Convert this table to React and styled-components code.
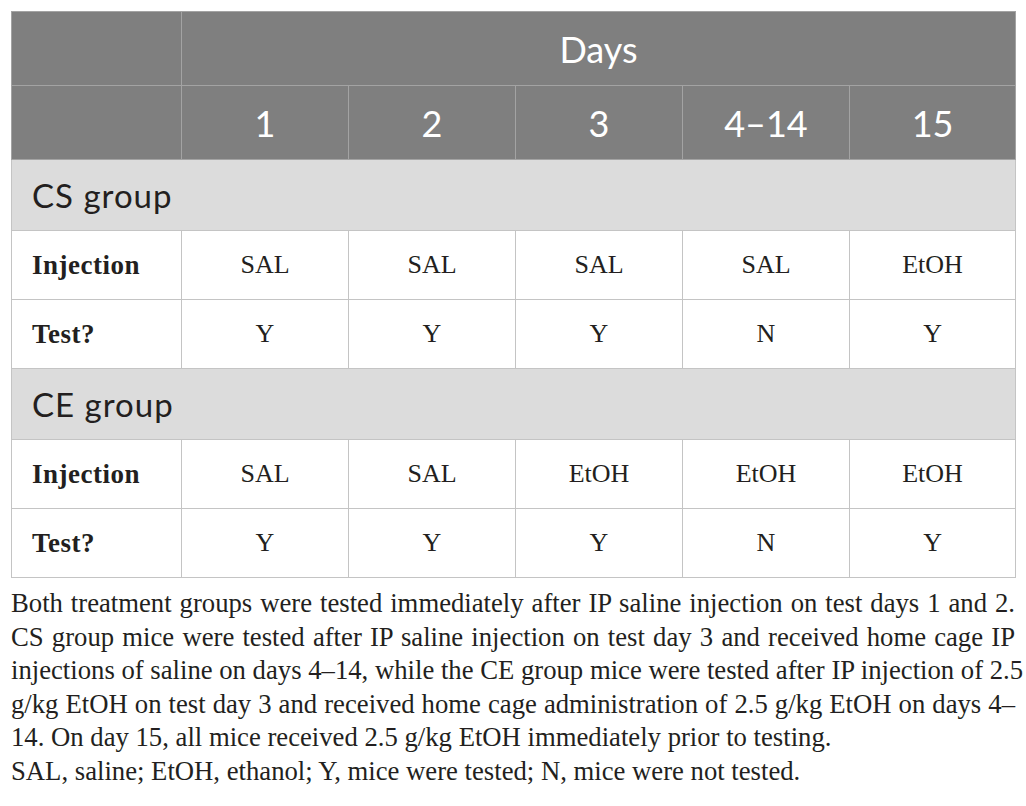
import React from "react";
import styled, { createGlobalStyle } from "styled-components";

const Global = createGlobalStyle`
  html, body { margin: 0; padding: 0; background: #fff; }
  body { font-family: "Liberation Serif", serif; color: #231f20; }
`;

const Page = styled.div`
  padding: 11px 11px 0 11px;
  width: 1004px;
`;

const Table = styled.table`
  border-collapse: collapse;
  table-layout: fixed;
  width: 1004px;
  border: 1px solid #c4c4c4;
`;

const HeadCell = styled.th`
  background: #7f7f7f;
  color: #fff;
  font-family: Lato, "Open Sans", sans-serif;
  font-weight: 400;
  font-size: 36px;
  height: 73px;
  padding: 0;
  text-align: center;
  border: 1px solid #a3a3a3;
`;

const GroupCell = styled.td`
  background: #dcdcdc;
  color: #231f20;
  font-family: Lato, "Open Sans", sans-serif;
  font-size: 33px;
  letter-spacing: 1px;
  height: 70px;
  padding: 0 0 0 20px;
  border: 1px solid #c4c4c4;
  text-align: left;
`;

const LabelCell = styled.td`
  font-family: "Liberation Serif", serif;
  font-weight: 700;
  font-size: 27px;
  letter-spacing: 0.5px;
  height: 68px;
  padding: 0 0 0 20px;
  border: 1px solid #c4c4c4;
  text-align: left;
`;

const DataCell = styled.td`
  font-family: "Liberation Serif", serif;
  font-size: 26px;
  padding: 0;
  border: 1px solid #c4c4c4;
  text-align: center;
`;

const Caption = styled.div`
  margin-top: 9px;
  font-family: "Liberation Serif", serif;
  font-size: 26.7px;
  line-height: 33.5px;
  color: #231f20;
`;

const Line = styled.div`
  white-space: nowrap;
  text-align: ${(p) => (p.$justify ? "justify" : "left")};
  text-align-last: ${(p) => (p.$justify ? "justify" : "left")};
`;

const days = ["1", "2", "3", "4–14", "15"];
const groups = [
  { name: "CS group", injection: ["SAL", "SAL", "SAL", "SAL", "EtOH"], test: ["Y", "Y", "Y", "N", "Y"] },
  { name: "CE group", injection: ["SAL", "SAL", "EtOH", "EtOH", "EtOH"], test: ["Y", "Y", "Y", "N", "Y"] },
];

const lines = [
  ["Both treatment groups were tested immediately after IP saline injection on test days 1 and 2.", true],
  ["CS group mice were tested after IP saline injection on test day 3 and received home cage IP", true],
  ["injections of saline on days 4–14, while the CE group mice were tested after IP injection of 2.5", true],
  ["g/kg EtOH on test day 3 and received home cage administration of 2.5 g/kg EtOH on days 4–", true],
  ["14. On day 15, all mice received 2.5 g/kg EtOH immediately prior to testing.", false],
  ["SAL, saline; EtOH, ethanol; Y, mice were tested; N, mice were not tested.", false],
];

export default function App() {
  return (
    <Page>
      <Global />
      <Table>
        <colgroup>
          <col style={{ width: 170 }} />
          <col style={{ width: 167 }} />
          <col style={{ width: 167 }} />
          <col style={{ width: 167 }} />
          <col style={{ width: 167 }} />
          <col style={{ width: 166 }} />
        </colgroup>
        <thead>
          <tr>
            <HeadCell />
            <HeadCell colSpan={5}>Days</HeadCell>
          </tr>
          <tr>
            <HeadCell />
            {days.map((d) => (
              <HeadCell key={d}>{d}</HeadCell>
            ))}
          </tr>
        </thead>
        <tbody>
          {groups.map((g) => (
            <React.Fragment key={g.name}>
              <tr>
                <GroupCell colSpan={6}>{g.name}</GroupCell>
              </tr>
              <tr>
                <LabelCell>Injection</LabelCell>
                {g.injection.map((v, i) => (
                  <DataCell key={i}>{v}</DataCell>
                ))}
              </tr>
              <tr>
                <LabelCell>Test?</LabelCell>
                {g.test.map((v, i) => (
                  <DataCell key={i}>{v}</DataCell>
                ))}
              </tr>
            </React.Fragment>
          ))}
        </tbody>
      </Table>
      <Caption>
        {lines.map(([t, j], i) => (
          <Line key={i} $justify={j}>
            {t}
          </Line>
        ))}
      </Caption>
    </Page>
  );
}
